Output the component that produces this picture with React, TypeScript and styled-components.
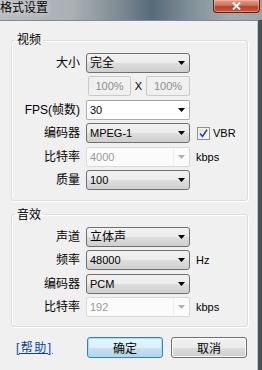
import React from "react"
import styled, { createGlobalStyle, css } from "styled-components"

const GlobalStyle = createGlobalStyle`
  html, body {
    margin: 0;
    padding: 0;
    background: #f0f0f0;
  }
  * {
    box-sizing: border-box;
  }
`

const FONT = `"Liberation Sans", "Noto Sans CJK SC", sans-serif`

const Window = styled.div`
  width: 262px;
  height: 370px;
  display: flex;
  flex-direction: column;
  font-family: ${FONT};
  font-size: 12px;
  color: #000;
  background: linear-gradient(
    90deg,
    #b9bdbf 0%,
    #a9afb2 28%,
    #7b8a93 46%,
    #566a78 58%,
    #7f8e97 72%,
    #a3acb1 88%,
    #9aa4aa 100%
  );
  overflow: hidden;
`

const TitleBar = styled.div`
  height: 20px;
  display: flex;
  justify-content: space-between;
  align-items: flex-start;
`

const Title = styled.div`
  padding-top: 1px;
  font-size: 12px;
  line-height: 14px;
  color: #000;
  text-shadow: 0 0 6px rgba(255, 255, 255, 0.8);
`

const CloseButton = styled.div`
  width: 47px;
  height: 13px;
  margin-right: 2px;
  display: flex;
  align-items: center;
  justify-content: center;
  border: 1px solid #5b2219;
  border-top: none;
  border-radius: 0 0 4px 4px;
  background: linear-gradient(180deg, #e3a08e 0%, #d0705a 45%, #b9412a 55%, #c85a3e 100%);
  box-shadow: inset 0 0 0 1px rgba(255, 200, 180, 0.45);
`

const Body = styled.div`
  flex: 1;
  display: flex;
  background: #45535c;
`

const Client = styled.div`
  width: 258px;
  display: flex;
  flex-direction: column;
  background: #f0f0f0;
  border-top: 1px solid #7f8b92;
  border-right: 1px solid #c4ccd1;
`

const Group = styled.fieldset<{ $first?: boolean }>`
  width: 237px;
  margin: ${(p) => (p.$first ? "12px" : "7px")} 0 0 11px;
  padding: ${(p) => (p.$first ? "6px 0 10px" : "5px 0 9px")};
  border: 1px solid #d5dfe5;
  border-radius: 3px;
  box-shadow: inset 1px 1px 0 #fff, 1px 1px 0 #fff;
  min-width: 0;
`

const Legend = styled.legend`
  margin-left: 3px;
  padding: 0 2px;
  font-size: 12px;
  line-height: 14px;
`

const Rows = styled.div`
  display: grid;
  grid-template-columns: 68px 104px auto;
  grid-auto-rows: 20px;
  column-gap: 6px;
  row-gap: 3.4px;
  align-items: center;
`

const Label = styled.div`
  text-align: right;
  white-space: nowrap;
  line-height: 14px;
  font-size: 12px;
`

const comboBase = css`
  height: 20px;
  display: flex;
  align-items: center;
  justify-content: space-between;
  padding: 0 4px 0 3px;
  border-radius: 3px;
  font-size: 11px;
  line-height: 14px;
  white-space: nowrap;
`

type ComboKind = "list" | "edit" | "disabled"

const ComboBox = styled.div<{ $kind: ComboKind }>`
  ${comboBase}
  ${(p) =>
    p.$kind === "list" &&
    css`
      border: 1px solid #707070;
      background: linear-gradient(180deg, #f2f2f2 0%, #ebebeb 50%, #dddddd 51%, #cfcfcf 100%);
      color: #000;
    `}
  ${(p) =>
    p.$kind === "edit" &&
    css`
      border: 1px solid #abadb3;
      border-top-color: #a0a3aa;
      border-radius: 2px;
      background: #fff;
      color: #000;
    `}
  ${(p) =>
    p.$kind === "disabled" &&
    css`
      border: 1px solid #d9d9d9;
      border-radius: 2px;
      background: #fbfbfb;
      color: #9a9a9a;
    `}
`

const ComboText = styled.span<{ $cjk?: boolean }>`
  font-size: ${(p) => (p.$cjk ? "12px" : "11px")};
`

const ArrowBox = styled.span<{ $disabled?: boolean }>`
  display: flex;
  align-items: center;
  height: 100%;
  padding-left: ${(p) => (p.$disabled ? "4px" : "0")};
  border-left: ${(p) => (p.$disabled ? "1px solid #f0f0f0" : "none")};
`

const SizeRow = styled.div`
  display: flex;
  align-items: center;
  justify-content: space-between;
  padding-left: 2px;
  height: 20px;
`

const PercentBox = styled.div<{ $w: number }>`
  width: ${(p) => p.$w}px;
  height: 20px;
  display: flex;
  align-items: center;
  justify-content: center;
  border: 1px solid #c9c9c9;
  border-radius: 2px;
  background: #f0f0f0;
  color: #8d8d8d;
  font-size: 11px;
`

const Times = styled.span`
  font-size: 11px;
  padding: 0 1px;
`

const Extra = styled.span`
  font-size: 11px;
  line-height: 14px;
  white-space: nowrap;
`

const CheckRow = styled.label`
  display: flex;
  align-items: center;
  gap: 3px;
  font-size: 11px;
  margin-left: 1px;
`

const CheckBox = styled.span`
  width: 13px;
  height: 13px;
  display: flex;
  align-items: center;
  justify-content: center;
  border: 1px solid #8f8f8f;
  background: linear-gradient(135deg, #dcdcdc 0%, #f6f6f6 70%, #ffffff 100%);
  box-shadow: inset 0 0 0 1px #f4f4f4;
`

const Footer = styled.div`
  display: flex;
  align-items: center;
  margin-top: 10px;
  padding-left: 16px;
`

const HelpLink = styled.a`
  width: 71px;
  color: #0b3fa6;
  text-decoration: underline;
  font-size: 12px;
  letter-spacing: 1.5px;
  line-height: 14px;
  cursor: pointer;
`

const Button = styled.button<{ $default?: boolean }>`
  width: 76px;
  height: 21px;
  margin-right: 8px;
  padding: 0;
  font-family: ${FONT};
  font-size: 12px;
  color: #000;
  border-radius: 3px;
  border: 1px solid ${(p) => (p.$default ? "#3c7fb1" : "#707070")};
  background: ${(p) =>
    p.$default
      ? "linear-gradient(180deg, #eaf6fd 0%, #d9eff9 50%, #c6e3f2 51%, #b4d4e6 100%)"
      : "linear-gradient(180deg, #f2f2f2 0%, #ebebeb 50%, #dddddd 51%, #cfcfcf 100%)"};
  box-shadow: ${(p) => (p.$default ? "inset 0 0 0 1px #a5def8" : "inset 0 0 0 1px #fcfcfc")};
`

const Arrow = ({ disabled }: { disabled?: boolean }) => (
  <svg width="7" height="4" viewBox="0 0 7 4">
    <polygon points="0,0 7,0 3.5,4" fill={disabled ? "#b0b0b0" : "#000"} />
  </svg>
)

const Combo = ({ value, kind = "list", cjk }: { value: string; kind?: ComboKind; cjk?: boolean }) => (
  <ComboBox $kind={kind}>
    <ComboText $cjk={cjk}>{value}</ComboText>
    <ArrowBox $disabled={kind === "disabled"}>
      <Arrow disabled={kind === "disabled"} />
    </ArrowBox>
  </ComboBox>
)

const Check = () => (
  <CheckBox>
    <svg width="9" height="9" viewBox="0 0 9 9">
      <path d="M1 4.5 L3.5 7.5 L8 0.8" fill="none" stroke="#2a4d8f" strokeWidth="1.6" />
    </svg>
  </CheckBox>
)

export default function App() {
  return (
    <>
      <GlobalStyle />
      <Window>
        <TitleBar>
          <Title>格式设置</Title>
          <CloseButton>
            <svg width="9" height="8" viewBox="0 0 9 8">
              <path d="M1 0.5 L8 7.5 M8 0.5 L1 7.5" stroke="#fff" strokeWidth="2" />
            </svg>
          </CloseButton>
        </TitleBar>
        <Body>
          <Client>
            <Group $first>
              <Legend>视频</Legend>
              <Rows>
                <Label>大小</Label>
                <Combo value="完全" cjk />
                <span />

                <span />
                <SizeRow>
                  <PercentBox $w={43}>100%</PercentBox>
                  <Times>X</Times>
                  <PercentBox $w={44}>100%</PercentBox>
                </SizeRow>
                <span />

                <Label>FPS(帧数)</Label>
                <Combo value="30" kind="edit" />
                <span />

                <Label>编码器</Label>
                <Combo value="MPEG-1" />
                <CheckRow>
                  <Check />
                  VBR
                </CheckRow>

                <Label>比特率</Label>
                <Combo value="4000" kind="disabled" />
                <Extra>kbps</Extra>

                <Label>质量</Label>
                <Combo value="100" />
                <span />
              </Rows>
            </Group>

            <Group>
              <Legend>音效</Legend>
              <Rows>
                <Label>声道</Label>
                <Combo value="立体声" cjk />
                <span />

                <Label>频率</Label>
                <Combo value="48000" />
                <Extra>Hz</Extra>

                <Label>编码器</Label>
                <Combo value="PCM" />
                <span />

                <Label>比特率</Label>
                <Combo value="192" kind="disabled" />
                <Extra>kbps</Extra>
              </Rows>
            </Group>

            <Footer>
              <HelpLink>[帮助]</HelpLink>
              <Button $default>确定</Button>
              <Button>取消</Button>
            </Footer>
          </Client>
        </Body>
      </Window>
    </>
  )
}
